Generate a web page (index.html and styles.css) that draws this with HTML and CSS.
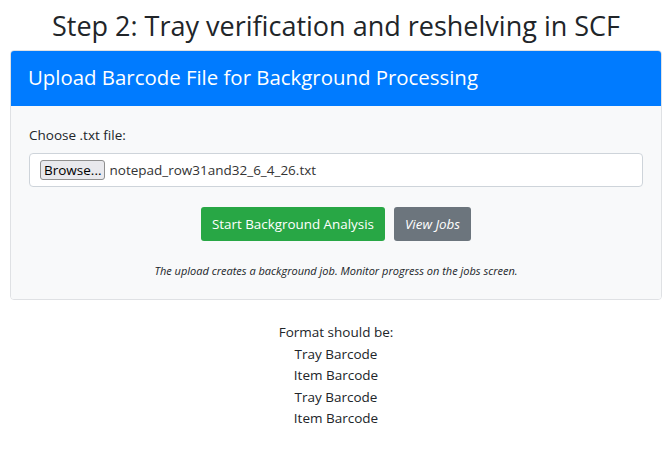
FILE: index.html
```html
<!DOCTYPE html>
<html>
<head>
  <title>Tray Verification</title>
  <link rel="stylesheet" href="styles.css">
</head>
<body>
  <h2 class="page-title">Step 2: Tray verification and reshelving in SCF</h2>

  <div class="card">
    <div class="card-header">Upload Barcode File for Background Processing</div>
    <div class="card-body">
      <label class="field-label">Choose .txt file:</label>
      <div class="file-box">
        <span class="browse-btn">Browse...</span>
        <span class="file-name">notepad_row31and32_6_4_26.txt</span>
      </div>
      <div class="actions">
        <button class="btn btn-success">Start Background Analysis</button>
        <button class="btn btn-secondary"><em>View Jobs</em></button>
      </div>
      <p class="note">The upload creates a background job. Monitor progress on the jobs screen.</p>
    </div>
  </div>

  <div class="format">
    Format should be:<br>
    Tray Barcode<br>
    Item Barcode<br>
    Tray Barcode<br>
    Item Barcode
  </div>
</body>
</html>
```

FILE: styles.css
```css
body {
  margin: 0;
  padding: 0 10px;
  font-family: "Open Sans", "Noto Sans", sans-serif;
  font-size: 14px;
  color: #212529;
  background: #fff;
}

.page-title {
  margin: 0;
  padding-top: 9px;
  height: 41px;
  text-align: center;
  font-weight: 400;
  font-size: 27px;
  line-height: 34px;
}

.card {
  border: 1px solid #dfe1e4;
  border-radius: 4px;
  overflow: hidden;
}

.card-header {
  background: #007bff;
  color: #fff;
  font-size: 20.4px;
  line-height: 26px;
  padding: 13px 17px 16px;
}

.card-body {
  background: #f8f9fa;
  padding: 19px 18px 21px;
}

.field-label {
  display: block;
  font-size: 13.5px;
  line-height: 20px;
  margin-bottom: 8px;
}

.file-box {
  display: flex;
  align-items: center;
  gap: 4px;
  height: 34px;
  box-sizing: border-box;
  padding: 0 10px;
  background: #fff;
  border: 1px solid #ced4da;
  border-radius: 4px;
}

.browse-btn {
  font-size: 13.5px;
  line-height: 18px;
  padding: 0 3px;
  border: 1px solid #8f8f8f;
  border-radius: 3px;
  background: #e9e9ed;
  color: #000;
}

.file-name {
  font-size: 13.5px;
  color: #333;
}

.actions {
  display: flex;
  justify-content: center;
  gap: 9px;
  margin-top: 20px;
}

.btn {
  font-family: inherit;
  font-size: 13.4px;
  line-height: 20px;
  padding: 7px 11px;
  border: none;
  border-radius: 3px;
  color: #fff;
}

.btn-success {
  background: #28a745;
}

.btn-secondary {
  background: #6c757d;
}

.note {
  margin: 23px 0 0;
  text-align: center;
  font-style: italic;
  font-size: 11px;
  line-height: 14px;
}

.format {
  margin-top: 22px;
  text-align: center;
  font-size: 13.5px;
  line-height: 21.6px;
}
```
